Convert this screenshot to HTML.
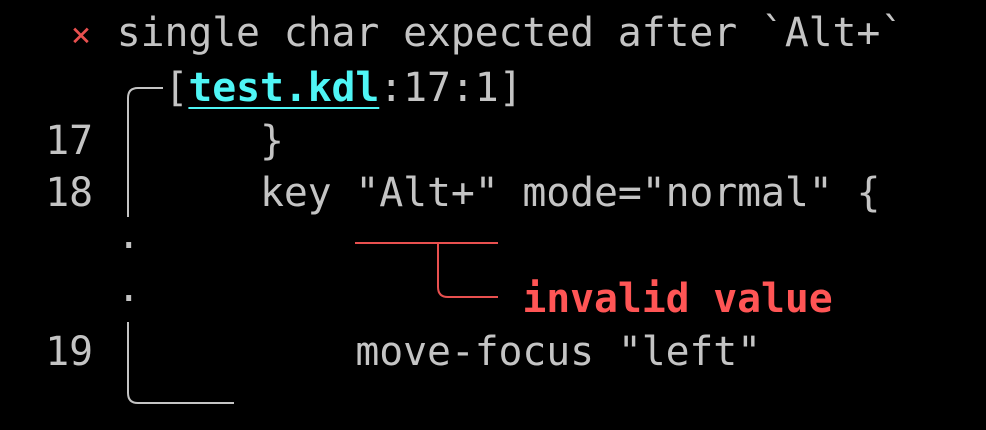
<!DOCTYPE html>
<html><head><style>
html,body{margin:0;padding:0;background:#000;width:986px;height:430px;overflow:hidden}
pre{position:absolute;left:-2.5px;top:7px;margin:0;font-family:"DejaVu Sans Mono","Liberation Mono",monospace;font-size:39.8px;line-height:52.8px;color:#c4c4c4;letter-spacing:-0.1px}
.r{color:#e8504f;font-size:34px;display:inline-block;width:23.8px;text-align:center}
.c{color:#4ff5f5;font-weight:bold;text-decoration:underline;text-underline-offset:6px;text-decoration-thickness:2px}
.b{color:#ff5555;font-weight:bold}
svg{position:absolute;left:0;top:0}
</style></head><body>
<pre>   <span class="r">×</span> single char expected after `Alt+`
       [<span class="c">test.kdl</span>:17:1]
  17       }
  18       key "Alt+" mode="normal" {
     ·
     ·                <span class="b">invalid value</span>
  19           move-focus "left"
</pre>
<svg width="986" height="430">
<g fill="none" stroke="#c4c4c4" stroke-width="2">
<path d="M128 217 V98 Q128 88 138 88 H163"/>
<path d="M128 322 V393 Q128 403 138 403 H234"/>
</g>
<g fill="none" stroke="#e8504f" stroke-width="2">
<path d="M355 243 H498"/>
<path d="M438 243 V287 Q438 297 448 297 H498"/>
</g>
</svg>
</body></html>
